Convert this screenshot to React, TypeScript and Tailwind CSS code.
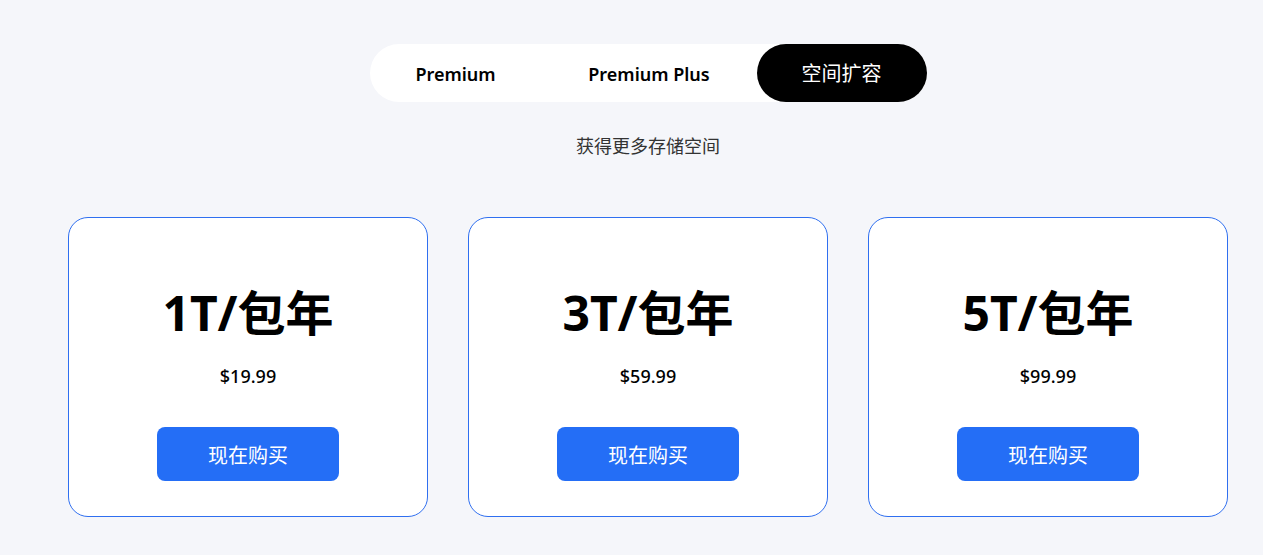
import React from "react";

const plans = [
  { title: "1T/包年", price: "$19.99" },
  { title: "3T/包年", price: "$59.99" },
  { title: "5T/包年", price: "$99.99" },
];

export default function App() {
  return (
    <div
      className="min-h-[555px] w-full bg-[#f5f6fa] pt-[44px] pl-[68px]"
      style={{ fontFamily: '"Noto Sans", "Noto Sans CJK SC", sans-serif' }}
    >
      <div className="flex w-[1160px] flex-col items-center">
        <div className="flex h-[58px] items-center rounded-full bg-white">
          <button className="flex h-[58px] w-[172px] items-center justify-center rounded-full pt-[2px] text-[18px] font-semibold text-black">
            Premium
          </button>
          <button className="flex h-[58px] w-[215px] items-center justify-center rounded-full pt-[2px] text-[18px] font-semibold text-black">
            Premium Plus
          </button>
          <button className="flex h-[58px] w-[170px] items-center justify-center rounded-full bg-black pt-[1px] text-[20px] font-normal text-white">
            空间扩容
          </button>
        </div>
        <p className="mt-[31px] text-[18px] leading-[27px] text-[#333333]">获得更多存储空间</p>
        <div className="mt-[57px] flex gap-[40px]">
          {plans.map((p) => (
            <div
              key={p.title}
              className="box-border flex h-[300px] w-[360px] flex-col items-center rounded-[20px] border border-[#2f6ff0] bg-white pt-[71px]"
            >
              <div className="text-[48px] font-bold leading-[48px] text-black">{p.title}</div>
              <div className="mt-[27px] text-[18px] font-medium leading-[24px] text-black">{p.price}</div>
              <button className="mt-[39px] flex h-[54px] w-[182px] items-center justify-center rounded-[8px] bg-[#246ef6] pt-[3px] text-[20px] text-white">
                现在购买
              </button>
            </div>
          ))}
        </div>
      </div>
    </div>
  );
}
